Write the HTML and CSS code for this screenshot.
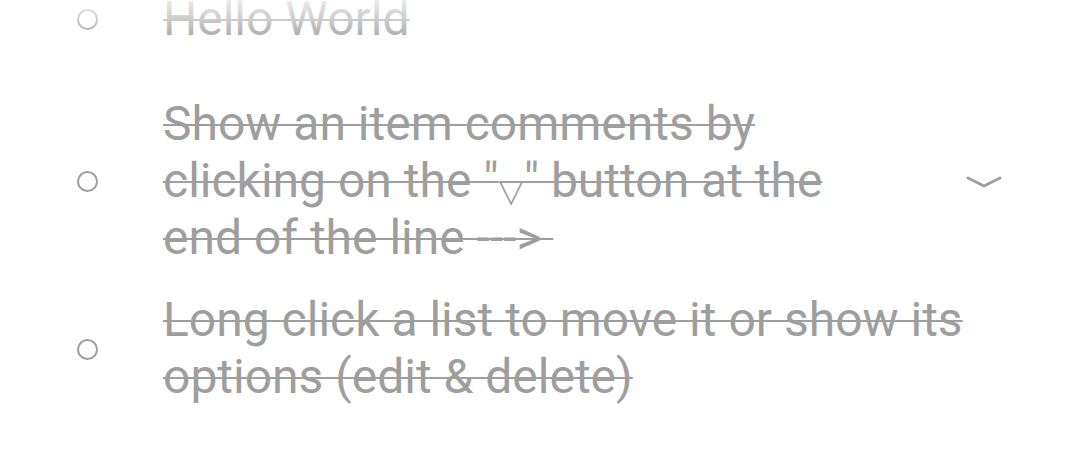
FILE: index.html
```html
<!DOCTYPE html>
<html>
<head>
<meta charset="utf-8">
<link rel="stylesheet" href="styles.css">
</head>
<body>
<div class="list">
  <div class="item item-first">
    <div class="check"><span class="circle"></span></div>
    <div class="text">Hello World</div>
    <div class="action"></div>
  </div>
  <div class="item">
    <div class="check"><span class="circle"></span></div>
    <div class="text narrow">Show an item comments by clicking on the "<span class="vee">▽</span>" button at the end of the line ---&gt;&nbsp;</div>
    <div class="action">
      <svg class="chevron" width="38" height="14" viewBox="0 0 38 14"><polyline points="3,3 19,11 35,3" fill="none" stroke="#9e9e9e" stroke-width="3" stroke-linecap="round" stroke-linejoin="round"/></svg>
    </div>
  </div>
  <div class="item item-last">
    <div class="check"><span class="circle"></span></div>
    <div class="text wide">Long click a list to move it or show its options (edit &amp; delete)</div>
  </div>
</div>
<div class="fade"></div>
</body>
</html>
```
FILE: styles.css
```css
html, body {
  margin: 0;
  padding: 0;
  background: #ffffff;
  width: 1080px;
  height: 450px;
  overflow: hidden;
}
.list {
  display: flex;
  flex-direction: column;
  margin-top: -23px;
  font-family: Roboto, "Noto Sans", sans-serif;
  font-size: 48px;
  color: #9e9e9e;
}
.item {
  display: flex;
  align-items: center;
  padding: 13px 0;
}
.item-first {
  margin-bottom: 22px;
}
.item-last {
  padding-top: 12px;
}
.check {
  width: 163px;
  flex: none;
  display: flex;
  justify-content: center;
  padding-left: 12px;
  padding-top: 2px;
  box-sizing: border-box;
}
.circle {
  width: 17px;
  height: 17px;
  border: 2.5px solid #9e9e9e;
  border-radius: 50%;
  display: block;
}
.text {
  width: 717px;
  flex: none;
  line-height: 57px;
  text-decoration: line-through;
  text-decoration-thickness: 2px;
}
.text.wide {
  width: 830px;
}
.vee {
  display: inline-block;
  vertical-align: top;
  box-sizing: border-box;
  width: 25px;
  height: 57px;
  padding-top: 23px;
  text-align: center;
  font-family: "DejaVu Sans", sans-serif;
  font-size: 32px;
  line-height: 32px;
  background: linear-gradient(#9e9e9e, #9e9e9e) no-repeat 0 29px / 100% 2px;
}
.action {
  flex: 1;
  display: flex;
  justify-content: flex-start;
}
.chevron {
  display: block;
  margin-left: 85px;
  margin-top: 2px;
}
.fade {
  position: absolute;
  left: 0;
  top: 0;
  width: 1080px;
  height: 46px;
  background: linear-gradient(to bottom, rgba(255,255,255,0.8), rgba(255,255,255,0));
  pointer-events: none;
}
```
